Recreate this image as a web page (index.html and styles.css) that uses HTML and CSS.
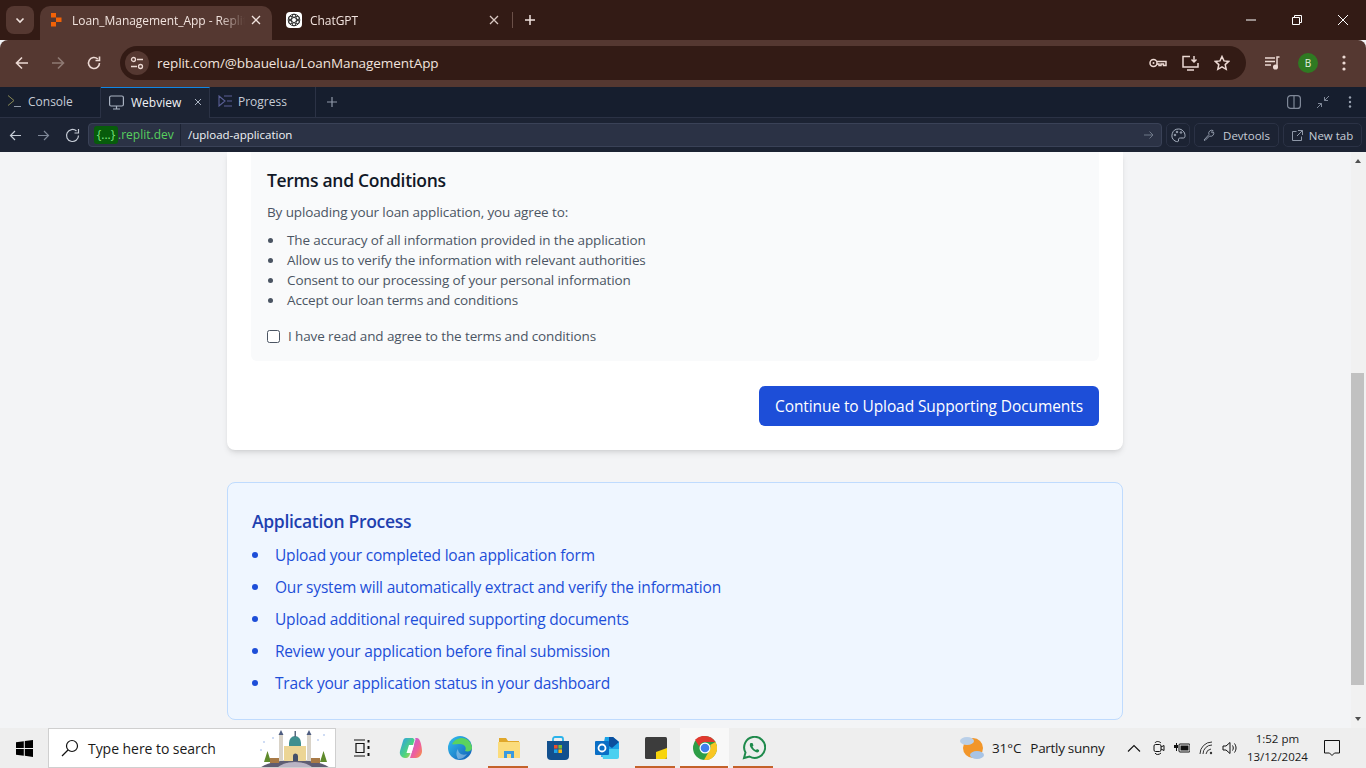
FILE: index.html
```html
<!DOCTYPE html>
<html lang="en">
<head>
    <meta charset="UTF-8">
    <title>Loan_Management_App - Replit</title>
    <link rel="stylesheet" href="styles.css">
</head>
<body>
    <header class="browser">
        <div class="tabstrip">
            <button class="tab-search"><svg width="12" height="12" viewBox="0 0 12 12"><path d="M2.500 4.500 6 8l3.500-3.500" fill="none" stroke="#f1e3de" stroke-width="1.600"/></svg></button>
            <div class="tab tab-active">
                <svg class="favicon" width="12" height="14" viewBox="0 0 12 14"><path d="M1 0h5v4.500H1zM6 4.500h5.500v4.500H6zM1 9h5v4.500H1z" fill="#f26207"/></svg>
                <span class="tab-title">Loan_Management_App - Replit</span>
                <svg class="tab-x" width="10" height="10" viewBox="0 0 10 10"><path d="M1 1l8 8M9 1l-8 8" stroke="#f1e3de" stroke-width="1.300"/></svg>
            </div>
            <div class="tab tab-second">
                <span class="gpt-icon"><svg width="14" height="14" viewBox="0 0 14 14" fill="none" stroke="#333" stroke-width="1"><circle cx="7" cy="7" r="5.800"/><ellipse cx="7" cy="7" rx="5.800" ry="2.400" transform="rotate(30 7 7)"/><ellipse cx="7" cy="7" rx="5.800" ry="2.400" transform="rotate(90 7 7)"/><ellipse cx="7" cy="7" rx="5.800" ry="2.400" transform="rotate(150 7 7)"/></svg></span>
                <span class="tab-title">ChatGPT</span>
                <svg class="tab-x" width="10" height="10" viewBox="0 0 10 10"><path d="M1 1l8 8M9 1l-8 8" stroke="#d9c8c2" stroke-width="1.300"/></svg>
            </div>
            <span class="tab-sep"></span>
            <svg class="tab-plus" width="12" height="12" viewBox="0 0 12 12"><path d="M6 1v10M1 6h10" stroke="#f1e3de" stroke-width="1.500"/></svg>
            <div class="window-btns">
                <svg width="10" height="10" viewBox="0 0 10 10"><path d="M0 5h10" stroke="#fff"/></svg>
                <svg width="10" height="10" viewBox="0 0 10 10" fill="none" stroke="#fff"><path d="M.5 2.500h7v7h-7zM2.500 2.500v-2h7v7h-2"/></svg>
                <svg width="10" height="10" viewBox="0 0 10 10"><path d="M0 0l10 10M10 0 0 10" stroke="#fff"/></svg>
            </div>
        </div>
        <div class="toolbar">
            <svg class="tb-icon" width="16" height="16" viewBox="0 0 16 16" fill="none" stroke="#ecd9d3" stroke-width="1.600"><path d="M14 8H2.500M8 2.500 2.500 8 8 13.500"/></svg>
            <svg class="tb-icon" width="16" height="16" viewBox="0 0 16 16" fill="none" stroke="#8f7a73" stroke-width="1.600"><path d="M2 8h11.500M8 2.500 13.500 8 8 13.500"/></svg>
            <svg class="tb-icon" width="16" height="16" viewBox="0 0 16 16" fill="none" stroke="#ecd9d3" stroke-width="1.600"><path d="M13.500 8A5.500 5.500 0 1 1 11.800 4M13.500 1.500v4h-4"/></svg>
            <div class="omnibox">
                <span class="site-info"><svg width="14" height="14" viewBox="0 0 14 14" fill="none" stroke="#ecd9d3" stroke-width="1.300"><circle cx="3.500" cy="3.500" r="2"/><path d="M7 3.500h6M1 10.500h6"/><circle cx="10.500" cy="10.500" r="2"/></svg></span>
                <span class="url">replit.com/@bbauelua/LoanManagementApp</span>
                <div class="omni-icons">
                    <svg width="18" height="12" viewBox="0 0 18 12" fill="none" stroke="#ecd9d3" stroke-width="1.500"><circle cx="4.500" cy="6" r="3.500"/><circle cx="4.500" cy="6" r="1" fill="#ecd9d3" stroke="none"/><path d="M8 4.500h9v4h-2.500V7H12v1.500h-2V7H8"/></svg>
                    <svg width="17" height="16" viewBox="0 0 17 16" fill="none" stroke="#ecd9d3" stroke-width="1.500"><path d="M8 1.500H1v10.500h15V8M5 15h7M12 1v6M9.500 4.500 12 7l2.500-2.500"/></svg>
                    <svg width="16" height="16" viewBox="0 0 16 16" fill="none" stroke="#ecd9d3" stroke-width="1.500"><path d="M8 1.500l2 4.400 4.700.5-3.500 3.200 1 4.700L8 11.900l-4.200 2.400 1-4.700L1.300 6.400 6 5.900z"/></svg>
                </div>
            </div>
            <svg class="media-icon" width="16" height="14" viewBox="0 0 16 14" fill="none" stroke="#ecd9d3" stroke-width="1.500"><path d="M0 2h10M0 5.500h10M0 9h6M14.500 1h-2.500v9.500"/><circle cx="10.500" cy="11" r="1.800" fill="#ecd9d3"/></svg>
            <span class="avatar">B</span>
            <svg class="kebab" width="4" height="16" viewBox="0 0 4 16" fill="#ecd9d3"><circle cx="2" cy="2" r="1.600"/><circle cx="2" cy="8" r="1.600"/><circle cx="2" cy="14" r="1.600"/></svg>
        </div>
    </header>

    <div class="replit-tabs">
        <div class="rtab rtab-console">
            <svg width="13" height="12" viewBox="0 0 13 12" fill="none" stroke="#8a8a55" stroke-width="1"><path d="M0 .5l6 5-6 5"/><path d="M6 11.500h7" stroke="#8f98a8"/></svg>
            <span>Console</span>
        </div>
        <div class="rtab rtab-active">
            <svg width="15" height="15" viewBox="0 0 15 15" fill="none" stroke="#aab3c2" stroke-width="1.200"><rect x=".6" y="1" width="13.800" height="10" rx="1.500"/><path d="M7.500 11v3M4 14h7"/></svg>
            <span>Webview</span>
            <svg class="rtab-x" width="8" height="8" viewBox="0 0 8 8"><path d="M1 1l6 6M7 1 1 7" stroke="#aab3c2"/></svg>
        </div>
        <div class="rtab rtab-progress">
            <svg width="15" height="12" viewBox="0 0 15 12" fill="none" stroke="#5a5f96" stroke-width="1.100"><path d="M1 1l6 5-6 5zM6 1h8M9 6h5M6 11h8"/></svg>
            <span>Progress</span>
        </div>
        <svg class="rtab-plus" width="10" height="10" viewBox="0 0 10 10"><path d="M5 0v10M0 5h10" stroke="#8f98a8" stroke-width="1.200"/></svg>
        <div class="rtab-right">
            <svg width="14" height="14" viewBox="0 0 14 14" fill="none" stroke="#7f8898" stroke-width="1.200"><rect x=".6" y=".6" width="12.800" height="12.800" rx="3"/><path d="M7 .6v12.800"/></svg>
            <svg width="14" height="14" viewBox="0 0 14 14" fill="none" stroke="#7f8898" stroke-width="1"><path d="M13 1 8.500 5.500M8.500 2v3.500H12M1 13l4.500-4.500M2 8.500h3.500V12"/></svg>
            <svg class="rtab-kebab" width="4" height="12" viewBox="0 0 4 12" fill="#9aa3b2"><circle cx="2" cy="1.500" r="1.200"/><circle cx="2" cy="6" r="1.200"/><circle cx="2" cy="10.500" r="1.200"/></svg>
        </div>
    </div>

    <div class="replit-nav">
        <svg class="nav-icon" width="13" height="13" viewBox="0 0 13 13" fill="none" stroke="#c6ccd6" stroke-width="1.200"><path d="M12 6.500H1.500M6 2 1.500 6.500 6 11"/></svg>
        <svg class="nav-icon" width="13" height="13" viewBox="0 0 13 13" fill="none" stroke="#7f8898" stroke-width="1.200"><path d="M1 6.500h10.500M7 2l4.500 4.500L7 11"/></svg>
        <svg class="nav-icon" width="15" height="15" viewBox="0 0 15 15" fill="none" stroke="#c6ccd6" stroke-width="1.200"><path d="M13.500 7.500a6 6 0 1 1-2-4.500M13.500 1v4h-4"/></svg>
        <div class="url-box">
            <span class="dev-domain"><span class="dev-pill">{...}</span>.replit.dev</span>
            <span class="dev-path">/upload-application</span>
            <svg class="url-go" width="10" height="10" viewBox="0 0 10 10" fill="none" stroke="#6f7889" stroke-width="1"><path d="M0 5h9M5.500 1.500 9 5 5.500 8.500"/></svg>
        </div>
        <button class="nav-btn nav-square"><svg width="15" height="15" viewBox="0 0 15 15" fill="none" stroke="#aab3c2" stroke-width="1"><path d="M7.500 1A6.500 6.500 0 0 0 4 13c2 1 4 1 3.500-1-.3-1.300.5-2 2-2h3c1.500 0 1.500-1.500 1.500-2.500C14 4 11 1 7.500 1z"/><circle cx="4" cy="7" r=".8"/><circle cx="6" cy="4" r=".8"/><circle cx="10" cy="4.500" r=".8"/></svg></button>
        <button class="nav-btn nav-devtools"><svg width="12" height="12" viewBox="0 0 12 12" fill="none" stroke="#8f98a8" stroke-width="1"><path d="M1 11l5-5.500a3 3 0 0 1 4-4L8.500 3l.7 1 1.300-1a3 3 0 0 1-4 4L2 11.500z"/></svg><span>Devtools</span></button>
        <button class="nav-btn nav-newtab"><svg width="11" height="11" viewBox="0 0 11 11" fill="none" stroke="#8f98a8" stroke-width="1"><path d="M4.500 1.500h-4v9h9v-4M6 .5h4.500V5M10.500 .5 5 6"/></svg><span>New tab</span></button>
    </div>

    <div class="viewport">
        <main class="page">
            <section class="card">
                <div class="terms">
                    <h3>Terms and Conditions</h3>
                    <p>By uploading your loan application, you agree to:</p>
                    <ul>
                        <li>The accuracy of all information provided in the application</li>
                        <li>Allow us to verify the information with relevant authorities</li>
                        <li>Consent to our processing of your personal information</li>
                        <li>Accept our loan terms and conditions</li>
                    </ul>
                    <label class="agree"><span class="checkbox"></span>I have read and agree to the terms and conditions</label>
                </div>
                <div class="card-actions">
                    <button class="continue-button">Continue to Upload Supporting Documents</button>
                </div>
            </section>

            <section class="process">
                <h3>Application Process</h3>
                <ul>
                    <li>Upload your completed loan application form</li>
                    <li>Our system will automatically extract and verify the information</li>
                    <li>Upload additional required supporting documents</li>
                    <li>Review your application before final submission</li>
                    <li>Track your application status in your dashboard</li>
                </ul>
            </section>
        </main>
        <div class="scrollbar">
            <span class="arrow-up"></span>
            <span class="thumb"></span>
            <span class="arrow-down"></span>
        </div>
    </div>

    <footer class="taskbar">
        <div class="start"><svg width="17" height="17" viewBox="0 0 17 17" fill="#000"><path d="M0 2.300 7.800 1.200v6.700H0zM8.800 1 17 0v7.900H8.800zM0 8.900h7.800v6.900L0 14.700zM8.800 8.900H17V17l-8.200-1.200z"/></svg></div>
        <div class="search">
            <svg width="18" height="18" viewBox="0 0 18 18" fill="none" stroke="#111" stroke-width="1.200"><circle cx="11" cy="7" r="5.500"/><path d="M7 11 1 17"/></svg>
            <span>Type here to search</span>
            <svg class="mosque" width="78" height="39" viewBox="0 0 78 39">
                <ellipse cx="38" cy="44" rx="38" ry="13" fill="#5f5d72"/>
                <ellipse cx="38" cy="44" rx="20" ry="11" fill="#b9b4c4"/>
                <path d="M27 17h22v15H27z" fill="#ecd595"/>
                <path d="M32 14a6 7 0 0 1 12 0v3H32z" fill="#3f8f8f"/>
                <rect x="37.500" y="2" width="1.500" height="6" fill="#5a6a80"/>
                <rect x="22" y="6" width="4" height="26" fill="#d9d3c8"/>
                <rect x="50" y="6" width="4" height="26" fill="#d9d3c8"/>
                <path d="M21.500 6 24 1l2.500 5zM49.500 6 52 1l2.500 5z" fill="#4e5d80"/>
                <path d="M36 32v-5a2.500 2.500 0 0 1 5 0v5z" fill="#44506a"/>
                <path d="M7 33l3.500-11 3.500 11zM63 33l3.500-11 3.500 11z" fill="#5f8a2c"/>
                <path d="M13 29h9v5h-9zM54 29h9v5h-9z" fill="#a87a46"/>
                <g fill="#cfdcf4"><rect x="6" y="12" width="2" height="2"/><rect x="15" y="8" width="2" height="2"/><rect x="60" y="10" width="2" height="2"/><rect x="66" y="5" width="2" height="2"/><rect x="3" y="20" width="2" height="2"/></g>
            </svg>
        </div>
        <div class="task-icons">
            <div class="task-item"><svg width="18" height="18" viewBox="0 0 18 18" fill="none" stroke="#111" stroke-width="1.200"><path d="M1 1h11M3 4.500h8v9H3zM1 17h11"/><path d="M15.500 1v2.500M15.500 7v3M15.500 14v3" stroke-width="2"/></svg></div>
            <div class="task-item"><svg width="24" height="22" viewBox="0 0 24 22"><defs><linearGradient id="cop-a" x1="0" y1="0" x2="1" y2="1"><stop offset="0" stop-color="#2c9bf0"/><stop offset=".6" stop-color="#4fd67a"/><stop offset="1" stop-color="#f5c63c"/></linearGradient><linearGradient id="cop-b" x1="0" y1="0" x2="1" y2="1"><stop offset="0" stop-color="#b45be8"/><stop offset=".6" stop-color="#f0609a"/><stop offset="1" stop-color="#f59a3c"/></linearGradient></defs><path d="M7 1h6c1 0 2 .5 2.500 2L11 17c-.5 2-2 4-4 4H6C3 21 0 18 1 14L4 4c.4-2 1.500-3 3-3z" fill="url(#cop-a)"/><path d="M11 21h6c3 0 6-3 6-7 0-3-1-8-2-10-.5-2-2-3-3-3h-2c1 1 .5 2 0 3l-4 14z" fill="url(#cop-b)"/><path d="M10 8h5l-2.500 8h-5z" fill="#fff"/></svg></div>
            <div class="task-item"><svg width="24" height="24" viewBox="0 0 24 24"><defs><linearGradient id="edge-a" x1="0" y1="0" x2="1" y2="1"><stop offset="0" stop-color="#35c1f1"/><stop offset="1" stop-color="#0f5bb5"/></linearGradient></defs><circle cx="12" cy="12" r="12" fill="url(#edge-a)"/><path d="M4 8C7 2 15 0 20 4c3 2.500 4 6 4 8 0 3-4 4-7 3 2-3 0-7-5-7C8 8 5 9 4 8z" fill="#5ad35f"/><path d="M10 13c0 4 4 7 9 5-2 3-5 5-9 5-1-2-3-6 0-10z" fill="#fff" opacity=".35"/></svg></div>
            <div class="task-item task-open"><svg width="22" height="20" viewBox="0 0 22 20"><path d="M1 0h7l2 3h11v3H1z" fill="#e0a72a"/><path d="M0 4h22v16H0z" fill="#fbdc7c"/><path d="M6 13h10v7h-3v-4H9v4H6z" fill="#3a9ae0"/></svg></div>
            <div class="task-item"><svg width="24" height="24" viewBox="0 0 24 24"><path d="M7 7V3a2 2 0 0 1 2-2h6a2 2 0 0 1 2 2v4" fill="none" stroke="#2bb3ea" stroke-width="1.800"/><path d="M1 5h22v15a4 4 0 0 1-4 4H5a4 4 0 0 1-4-4z" fill="#12508e"/><rect x="8" y="9" width="3.600" height="3.600" fill="#ea4f2b"/><rect x="12.400" y="9" width="3.600" height="3.600" fill="#7cbc35"/><rect x="8" y="13.400" width="3.600" height="3.600" fill="#1ea5e8"/><rect x="12.400" y="13.400" width="3.600" height="3.600" fill="#fcb712"/></svg></div>
            <div class="task-item"><svg width="24" height="22" viewBox="0 0 24 22"><path d="M10 0h8l6 5v15H6z" fill="#1aa3e8"/><path d="M14 0h4l6 5-7 6-3-2z" fill="#0b4f9e"/><path d="M6 12h18v8a2 2 0 0 1-2 2H8z" fill="#4ad0f0"/><rect x="0" y="4" width="14" height="14" rx="1" fill="#0a6fc6"/><circle cx="7" cy="11" r="3.500" fill="none" stroke="#fff" stroke-width="1.800"/></svg></div>
            <div class="task-item task-open"><svg width="22" height="22" viewBox="0 0 22 22"><rect width="22" height="22" rx="1.500" fill="#3c3c3c"/><path d="M11 22V15l11-4v9a2 2 0 0 1-2 2z" fill="#f8d50d"/></svg></div>
            <div class="task-item task-open task-focus"><svg width="24" height="24" viewBox="0 0 24 24"><circle cx="12" cy="12" r="12" fill="#2e9e47"/><path d="M12 0a12 12 0 0 1 10.400 6H12a6 6 0 0 0-5.800 4.500L2 3.800A12 12 0 0 1 12 0z" fill="#e0392f"/><path d="M22.400 6A12 12 0 0 1 11 24l5.100-8.900A6 6 0 0 0 17.200 9z" fill="#f9c623"/><circle cx="12" cy="12" r="5.500" fill="#fff"/><circle cx="12" cy="12" r="4.300" fill="#3f7fec"/></svg></div>
            <div class="task-item task-open"><svg width="24" height="24" viewBox="0 0 24 24" fill="none" stroke="#1f8a4c" stroke-width="2"><path d="M2 22l1.500-5.500A10.500 10.500 0 1 1 7.500 20.500z"/><path d="M8.500 7c-1 1-1 3 .5 5s3.500 4 6 4.500c1.500 0 2.500-1.500 2-2.500l-2-1-1 1c-1.500-.5-3-2-3.500-3.500l1-1-1-2.500z" fill="#1f8a4c" stroke="none"/></svg></div>
        </div>
        <div class="tray">
            <div class="weather">
                <svg width="25" height="24" viewBox="0 0 25 24"><circle cx="13" cy="12" r="10" fill="#f2962a"/><ellipse cx="7" cy="5" rx="7" ry="4" fill="#b9cfe8"/><ellipse cx="17" cy="19" rx="7" ry="4" fill="#a8c4e6"/></svg>
                <span class="temp">31°C</span>
                <span class="forecast">Partly sunny</span>
            </div>
            <div class="tray-icons">
                <svg class="tray-chevron" width="14" height="8" viewBox="0 0 14 8" fill="none" stroke="#111" stroke-width="1.100"><path d="M1 7.500 7 1.500l6 6"/></svg>
                <svg width="12" height="16" viewBox="0 0 12 16" fill="none" stroke="#111" stroke-width="1"><path d="M2 3c1-2 4-2 6 0M2 13c1 2 4 2 6 0"/><rect x="1" y="4.500" width="7" height="7" rx="1.500"/><path d="M8 7l3-1.500v5L8 9"/></svg>
                <svg width="16" height="10" viewBox="0 0 16 10"><path d="M0 2h2V0h1v2h1v3H3v3H2V5H0z" fill="#111"/><rect x="5" y="1" width="11" height="8" rx="1" fill="none" stroke="#111"/><rect x="6.500" y="2.500" width="8" height="5" fill="#111"/></svg>
                <svg width="14" height="14" viewBox="0 0 14 14" fill="none" stroke="#333" stroke-width="1"><path d="M1 13A12 12 0 0 1 13 1M4 13a9 9 0 0 1 9-9M7 13a6 6 0 0 1 5-5"/><circle cx="12" cy="12" r="1.200" fill="#333" stroke="none"/></svg>
                <svg width="16" height="14" viewBox="0 0 16 14" fill="none" stroke="#111" stroke-width="1"><path d="M1 5h3l4-3.500v11L4 9H1zM10.500 4.500c1 1.500 1 3.500 0 5M12.500 2.500c2 3 2 6 0 9"/></svg>
            </div>
            <div class="clock"><span>1:52 pm</span><span>13/12/2024</span></div>
            <svg class="notify" width="16" height="16" viewBox="0 0 16 16" fill="none" stroke="#111" stroke-width="1"><path d="M.5 .5h15v12.500h-5L8 15.500 5.500 13h-5z"/></svg>
        </div>
    </footer>
</body>
</html>
```

FILE: styles.css
```css
* {
    box-sizing: border-box;
}
html, body {
    margin: 0;
    height: 768px;
    overflow: hidden;
}
body {
    width: 1366px;
    display: flex;
    flex-direction: column;
    font-family: "Open Sans", "Noto Sans", sans-serif;
    background-color: #f3f4f6;
}
button {
    font-family: inherit;
    border: none;
    padding: 0;
}
svg {
    display: block;
    flex: none;
}

/* browser chrome */
.tabstrip {
    height: 40px;
    display: flex;
    align-items: flex-end;
    background-color: #331b15;
    color: #f1e3de;
    font-size: 12px;
}
.tab-search {
    width: 28px;
    height: 28px;
    margin: 0 6px 6px 6px;
    border-radius: 8px;
    background-color: #553831;
    display: flex;
    align-items: center;
    justify-content: center;
}
.tab {
    width: 232px;
    height: 34px;
    display: flex;
    align-items: center;
    padding: 0 11px 6px 10px;
    border-radius: 10px 10px 0 0;
}
.tab-active {
    background-color: #553831;
}
.tab-second {
    padding-right: 5px;
}
.favicon {
    margin-right: 10px;
}
.tab-title {
    flex: 1;
    white-space: nowrap;
    overflow: hidden;
    letter-spacing: -0.05px;
    -webkit-mask-image: linear-gradient(to right, #000 85%, transparent 100%);
    mask-image: linear-gradient(to right, #000 85%, transparent 100%);
}
.tab-x {
    margin-left: 6px;
}
.gpt-icon {
    width: 16px;
    height: 16px;
    margin: 0 8px 0 4px;
    border-radius: 4px;
    background-color: #fff;
    display: flex;
    align-items: center;
    justify-content: center;
}
.tab-sep {
    width: 1px;
    height: 16px;
    margin: 0 0 12px 8px;
    background-color: #6b5048;
}
.tab-plus {
    margin: 0 0 14px 11px;
}
.window-btns {
    margin-left: auto;
    display: flex;
    align-items: center;
    gap: 36px;
    padding: 0 18px 15px 0;
}
.toolbar {
    height: 47px;
    display: flex;
    align-items: center;
    padding: 6px 0 7px 14px;
    background-color: #553831;
    border-radius: 8px 8px 0 0;
}
.tb-icon {
    margin-right: 20px;
}
.tb-icon:nth-child(3) {
    margin-right: 18px;
}
.omnibox {
    width: 1126px;
    height: 34px;
    display: flex;
    align-items: center;
    padding-left: 5px;
    border-radius: 17px;
    background-color: #331b15;
    color: #f1e3de;
    font-size: 13.500px;
    letter-spacing: -0.07px;
}
.site-info {
    width: 24px;
    height: 24px;
    margin-right: 8px;
    border-radius: 50%;
    background-color: #553831;
    display: flex;
    align-items: center;
    justify-content: center;
}
.omni-icons {
    margin-left: auto;
    margin-right: 16px;
    display: flex;
    align-items: center;
    gap: 15px;
}
.media-icon {
    margin-left: 19px;
}
.avatar {
    width: 20px;
    height: 20px;
    margin-left: 17px;
    border-radius: 50%;
    background-color: #2f7a22;
    color: #e6f2e0;
    font-size: 10px;
    line-height: 20px;
    text-align: center;
}
.kebab {
    margin-left: 24px;
}

/* replit panes */
.replit-tabs {
    height: 31px;
    display: flex;
    align-items: stretch;
    background-color: #161e2e;
    border-bottom: 1px solid #2b3245;
    color: #c6ccd6;
    font-size: 12px;
}
.rtab {
    display: flex;
    align-items: center;
    gap: 7px;
    padding-bottom: 2px;
    border-right: 1px solid #2b3245;
}
.rtab-console {
    width: 101px;
    padding-left: 8px;
}
.rtab-active {
    width: 109px;
    padding-left: 8px;
    background-color: #1c2333;
    border-top: 1px solid #0f87e6;
    margin-bottom: -1px;
    color: #f0f2f6;
    font-weight: 500;
}
.rtab-x {
    margin-left: 6px;
}
.rtab-progress {
    width: 106px;
    padding-left: 8px;
    gap: 5px;
}
.rtab-plus {
    align-self: center;
    margin-left: 11px;
}
.rtab-right {
    margin-left: auto;
    display: flex;
    align-items: center;
    gap: 15px;
    padding-right: 14px;
}
.rtab-kebab {
    margin-left: 3px;
}
.replit-nav {
    height: 34px;
    display: flex;
    align-items: center;
    padding: 0 4px 0 9px;
    background-color: #1c2333;
    color: #f0f2f6;
    font-size: 11.500px;
}
.nav-icon {
    margin-right: 15px;
}
.nav-icon:nth-child(3) {
    margin-right: 8px;
}
.url-box {
    width: 1074px;
    height: 24px;
    display: flex;
    align-items: center;
    padding-left: 5px;
    border: 1px solid #3a4257;
    border-radius: 4px;
    background-color: #2b3245;
}
.dev-domain {
    width: 87px;
    height: 22px;
    line-height: 21px;
    font-size: 12px;
    color: #58d05e;
    border-right: 1px solid #1c2333;
}
.dev-pill {
    display: inline-block;
    width: 24px;
    height: 18px;
    line-height: 17px;
    text-align: center;
    border-radius: 3px;
    color: #7be27f;
    background-color: #075c0b;
}
.dev-path {
    margin: 0 0 1px 7px;
    font-size: 11.500px;
    font-weight: 500;
}
.url-go {
    margin-left: auto;
    margin-right: 7px;
}
.nav-btn {
    height: 24px;
    margin-left: 4px;
    display: flex;
    align-items: center;
    justify-content: center;
    gap: 8px;
    border: 1px solid #2b3245;
    border-radius: 5px;
    background-color: #1c2333;
    color: #c6ccd6;
    font-size: 11.500px;
}
.nav-square {
    width: 24px;
}
.nav-devtools {
    width: 85px;
}
.nav-newtab {
    width: 79px;
    gap: 6px;
}

/* the app itself */
.viewport {
    height: 576px;
    display: flex;
    overflow: hidden;
}
.page {
    flex: 1;
    display: flex;
    flex-direction: column;
    align-items: center;
    padding-right: 1px;
}
.card {
    width: 896px;
    height: 298px;
    padding: 0 24px;
    border-radius: 0 0 8px 8px;
    background-color: #fff;
    box-shadow: 0 4px 6px -1px rgba(0, 0, 0, 0.1), 0 2px 4px -2px rgba(0, 0, 0, 0.1);
}
.terms {
    height: 209px;
    padding: 16px 16px 0;
    border-radius: 0 0 6px 6px;
    background-color: #f9fafb;
}
.terms h3 {
    margin: 0 0 10px;
    font-size: 17.500px;
    letter-spacing: -0.3px;
    line-height: 24px;
    font-weight: 600;
    color: #111827;
}
.terms p {
    margin: 0 0 8px;
    font-size: 13.500px;
    letter-spacing: -0.12px;
    line-height: 20px;
    color: #4b5563;
}
.terms ul {
    margin: 0 0 16px;
    padding: 0;
    list-style: none;
    font-size: 13.500px;
    letter-spacing: -0.12px;
    line-height: 20px;
    color: #4b5563;
}
.terms li, .process li {
    display: flex;
    align-items: center;
}
.terms li::before {
    content: "";
    width: 5px;
    height: 5px;
    margin: 0 14px 0 1px;
    border-radius: 50%;
    background-color: #4b5563;
}
.agree {
    display: flex;
    align-items: center;
    font-size: 13.500px;
    letter-spacing: -0.12px;
    line-height: 20px;
    color: #4b5563;
}
.checkbox {
    width: 13px;
    height: 13px;
    margin-right: 8px;
    border: 1px solid #4b5563;
    border-radius: 2.500px;
    background-color: #fff;
}
.card-actions {
    display: flex;
    justify-content: flex-end;
    margin-top: 25px;
}
.continue-button {
    width: 340px;
    height: 40px;
    border-radius: 6px;
    background-color: #1d4ed8;
    color: #fff;
    font-size: 15.500px;
    letter-spacing: -0.1px;
}
.process {
    width: 896px;
    height: 238px;
    margin-top: 32px;
    padding: 24px;
    border: 1px solid #bfdbfe;
    border-radius: 8px;
    background-color: #eff6ff;
}
.process h3 {
    margin: 2px 0 10px;
    font-size: 17.500px;
    letter-spacing: -0.3px;
    line-height: 24px;
    font-weight: 600;
    color: #1e40af;
}
.process ul {
    margin: 0;
    padding: 0;
    list-style: none;
    font-size: 15.500px;
    letter-spacing: -0.2px;
    line-height: 24px;
    color: #1d4ed8;
}
.process li {
    margin-bottom: 8px;
}
.process li::before {
    content: "";
    width: 6px;
    height: 6px;
    margin-right: 17px;
    border-radius: 50%;
    background-color: #1d4ed8;
}
.scrollbar {
    width: 15px;
    position: relative;
    background-color: #f1f1f1;
}
.arrow-up, .arrow-down {
    position: absolute;
    left: 4px;
    width: 0;
    height: 0;
    border-left: 3.500px solid transparent;
    border-right: 3.500px solid transparent;
}
.arrow-up {
    top: 7px;
    border-bottom: 4px solid #505050;
}
.arrow-down {
    bottom: 7px;
    border-top: 4px solid #505050;
}
.thumb {
    position: absolute;
    top: 221px;
    left: 0;
    width: 13px;
    height: 312px;
    background-color: #c1c1c1;
}

/* windows taskbar */
.taskbar {
    height: 40px;
    display: flex;
    align-items: stretch;
    background-color: #eeeeee;
    color: #1a1a1a;
    font-size: 14px;
}
.start {
    width: 48px;
    display: flex;
    align-items: center;
    justify-content: center;
}
.search {
    width: 288px;
    display: flex;
    align-items: center;
    padding-left: 12px;
    gap: 9px;
    border: 1px solid #cfcfcf;
    background-color: #fff;
    position: relative;
    overflow: hidden;
    letter-spacing: -0.05px;
}
.mosque {
    position: absolute;
    right: 0;
    top: 0;
}
.task-icons {
    display: flex;
    margin-left: 1px;
}
.task-item {
    width: 49px;
    display: flex;
    align-items: center;
    justify-content: center;
    position: relative;
}
.task-open::after {
    content: "";
    position: absolute;
    left: 4px;
    right: 5px;
    bottom: 0;
    height: 2px;
    background-color: #c4622a;
}
.task-focus {
    background-color: #f8f8f8;
}
.task-focus::after {
    left: 0;
    right: 1px;
}
.tray {
    flex: 1;
    display: flex;
    align-items: center;
}
.weather {
    display: flex;
    align-items: center;
    margin-left: 182px;
    font-size: 13.500px;
    letter-spacing: -0.1px;
}
.temp {
    margin: 0 9px 0 7px;
}
.forecast {
    letter-spacing: -0.3px;
}
.tray-icons {
    display: flex;
    align-items: center;
    gap: 9px;
    margin-left: 23px;
}
.tray-chevron {
    margin-right: 3px;
}
.clock {
    width: 68px;
    margin-left: 5px;
    display: flex;
    flex-direction: column;
    align-items: center;
    font-size: 11.500px;
    line-height: 18px;
}
.notify {
    margin-left: 13px;
}
```
